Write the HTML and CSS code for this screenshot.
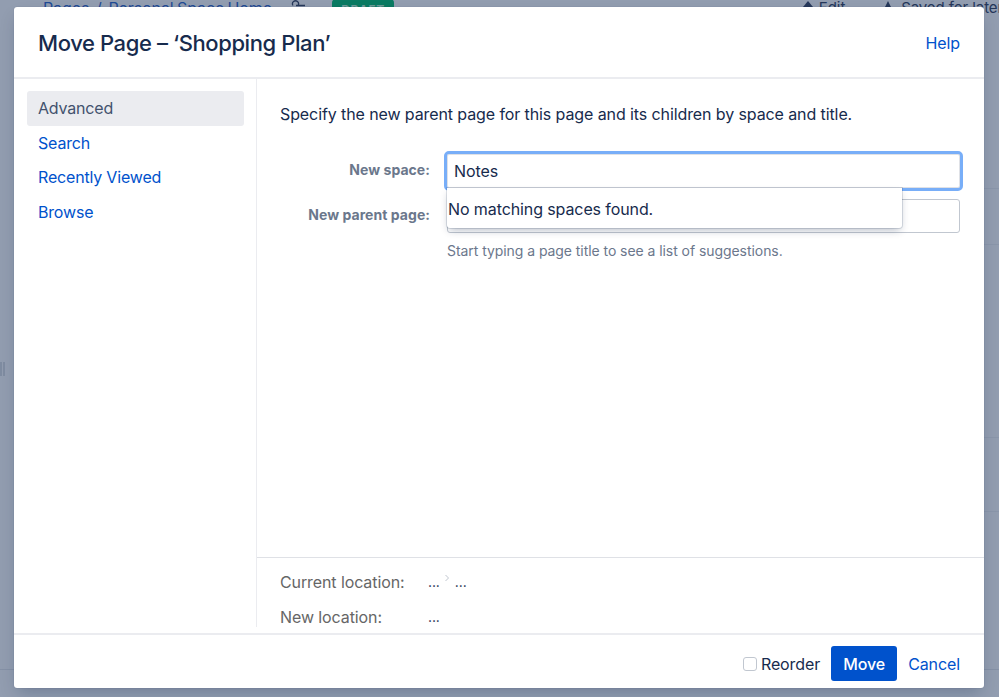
FILE: index.html
```html
<!DOCTYPE html>
<html lang="en">
<head>
<meta charset="utf-8">
<title>Move Page</title>
<link rel="stylesheet" href="styles.css">
</head>
<body>
<div class="page">
  <div class="topbar">
    <div class="crumbs">Pages&nbsp;&nbsp;/&nbsp;&nbsp;Personal Space Home</div>
    <svg class="tree-icon" width="20" height="12" viewBox="0 0 20 12"><path d="M5 5.5a3 3 0 1 1 5 0M8 5.5h9" fill="none" stroke="#26385a" stroke-width="1.3"/></svg>
    <div class="badge">DRAFT</div>
    <div class="actions">
      <span class="action"><svg width="14" height="14" viewBox="0 0 14 14"><path d="M7 0l5 6H2z" fill="#26385a"/></svg>Edit</span>
      <span class="action"><svg width="18" height="14" viewBox="0 0 18 14"><path d="M9 0l3 6h6l-4 4H4L0 6h6z" fill="#26385a"/></svg>Saved for later</span>
    </div>
  </div>
  <div class="rule rule-a"></div>
  <div class="rule rule-b"></div>
  <div class="rule rule-c"></div>
  <div class="rule rule-d"></div>
  <div class="rule rule-e"></div>
  <div class="handle"></div>

  <div class="dialog">
    <header class="dialog-head">
      <h1 class="dialog-title">Move Page – ‘Shopping Plan’</h1>
      <a class="link">Help</a>
    </header>
    <div class="dialog-body">
      <nav class="side">
        <a class="side-item active">Advanced</a>
        <a class="side-item">Search</a>
        <a class="side-item">Recently Viewed</a>
        <a class="side-item">Browse</a>
      </nav>
      <div class="main">
        <div class="content">
          <p class="intro">Specify the new parent page for this page and its children by space and title.</p>
          <div class="field-row first">
            <label class="field-label">New space:</label>
            <div class="field">
              <input class="text-input focused" type="text" value="Notes">
              <div class="dropdown">No matching spaces found.</div>
            </div>
          </div>
          <div class="field-row">
            <label class="field-label">New parent page:</label>
            <div class="field">
              <input class="text-input" type="text">
              <div class="hint">Start typing a page title to see a list of suggestions.</div>
            </div>
          </div>
        </div>
        <div class="locations">
          <div class="loc-row">
            <span class="loc-label">Current location:</span>
            <span class="loc-value">...<svg class="chev" width="6" height="9" viewBox="0 0 6 9"><path d="M1.5 1l3 3-3 3" fill="none" stroke="#c1c7d0" stroke-width="1"/></svg>...</span>
          </div>
          <div class="loc-row">
            <span class="loc-label">New location:</span>
            <span class="loc-value">...</span>
          </div>
        </div>
      </div>
    </div>
    <footer class="dialog-foot">
      <label class="reorder"><input class="check" type="checkbox">Reorder</label>
      <button class="btn-primary" type="button">Move</button>
      <a class="link">Cancel</a>
    </footer>
  </div>
</div>
</body>
</html>
```
FILE: styles.css
```css
* { box-sizing: border-box; }
html, body { margin: 0; padding: 0; }
body { font-family: Inter, "Liberation Sans", sans-serif; font-size: 16px; letter-spacing: -0.1px; color: #172b4d; }
.page {
  position: relative;
  width: 999px;
  height: 697px;
  overflow: hidden;
  background: #929db0;
}
.topbar { display: flex; align-items: flex-start; height: 16px; font-size: 15px; line-height: 16px; padding-left: 43px; }
.crumbs { width: 244px; white-space: nowrap; color: #1f4a94; font-size: 16px; letter-spacing: -0.1px; word-spacing: -1px; }
.tree-icon { margin: 0 0 0 1px; }
.badge { margin: -1px 0 0 24px; width: 62px; height: 16px; background: #0a7a62; border-radius: 4px; color: #6d9a98; font-size: 12px; font-weight: 700; line-height: 22px; letter-spacing: 0.6px; text-align: center; }
.actions { display: flex; gap: 34px; margin-left: auto; margin-right: -4px; color: #25375a; }
.action { display: flex; gap: 4px; align-items: flex-start; white-space: nowrap; }
.action svg { margin-top: 1px; }
.rule { position: absolute; height: 1px; background: #8a96aa; }
.rule-a { left: 984px; right: 0; top: 188px; }
.rule-b { left: 984px; right: 0; top: 244px; }
.rule-c { left: 984px; right: 0; top: 437px; }
.rule-d { left: 984px; right: 0; top: 511px; }
.rule-e { left: 0; right: 0; top: 669px; background: #8591a6; }
.handle { position: absolute; left: 0; top: 362px; width: 5px; height: 14px; border-left: 2px solid #7f8ca1; border-right: 2px solid #7f8ca1; }
.dialog {
  position: absolute;
  left: 14px;
  top: 7px;
  width: 970px;
  height: 681px;
  display: flex;
  flex-direction: column;
  background: #fff;
  border-radius: 3px;
  box-shadow: 0 0 1px rgba(9,30,66,.31), 0 8px 16px -4px rgba(9,30,66,.25);
}
.dialog-head {
  display: flex;
  align-items: center;
  justify-content: space-between;
  height: 72px;
  padding: 2px 24px 0;
  border-bottom: 2px solid #ebecf0;
}
.dialog-title { margin: 0; font-size: 22px; font-weight: 500; line-height: 28px; color: #172b4d; letter-spacing: -0.4px; }
.link { color: #0052cc; text-decoration: none; }
.dialog-body { display: flex; height: 548px; }
.side { width: 243px; flex: none; padding: 12px 12px 0 13px; border-right: 1px solid #ebecf0; }
.side-item { display: flex; align-items: center; height: 34.5px; padding-left: 11px; color: #0052cc; border-radius: 3px; letter-spacing: -0.18px; }
.side-item.active { background: #ebecf0; color: #42526e; }
.main { flex: 1; display: flex; flex-direction: column; min-width: 0; }
.content { flex: 1; padding: 23px 24px 0 23px; }
.intro { margin: 0 0 28px; line-height: 24px; color: #172b4d; }
.field-row { display: grid; grid-template-columns: 150px 1fr; column-gap: 17px; margin-bottom: 11px; }
.field-label { font-size: 14px; font-weight: 700; letter-spacing: 0.05px; color: #6b778c; text-align: right; line-height: 32px; }
.field { position: relative; }
.text-input { display: block; width: 100%; height: 34px; padding: 0 6px; font: inherit; letter-spacing: inherit; color: #172b4d; background: #fff; border: 1px solid #c1c7d0; border-radius: 3px; }
.text-input.focused { border-color: #dfe1e6; outline: 3px solid #78aef8; border-radius: 2px; }
.dropdown {
  position: absolute;
  left: 0;
  top: 34px;
  width: 455px;
  height: 40px;
  padding-left: 1px;
  line-height: 43px;
  background: #fff;
  border-radius: 0 0 3px 3px;
  box-shadow: 0 0 0 1px rgba(9,30,66,.13), 0 4px 8px -2px rgba(9,30,66,.3);
  z-index: 2;
}
.hint { margin-top: 8px; font-size: 14px; line-height: 20px; letter-spacing: -0.06px; color: #6b778c; }
.locations { height: 70px; padding: 6px 24px 0 23px; border-top: 1px solid #dfe1e6; overflow: hidden; }
.loc-row { display: flex; height: 35px; align-items: center; color: #666; }
.loc-label { width: 148px; }
.loc-value { color: #172b4d; font-size: 14px; display: flex; align-items: center; }
.chev { margin: -6px 5px 0 4px; }
.dialog-foot {
  display: flex;
  align-items: center;
  justify-content: flex-end;
  gap: 11px;
  margin-top: 6px;
  flex: 1;
  padding: 10px 24px 6px;
  border-top: 2px solid #ebecf0;
}
.reorder { display: flex; align-items: center; gap: 4px; }
.check { appearance: none; margin: 0; width: 14px; height: 14px; background: #fff; border: 1px solid #c1c7d0; border-radius: 3px; }
.btn-primary { width: 66px; height: 35px; border: 0; border-radius: 3px; background: #0052cc; color: #fff; font: inherit; letter-spacing: inherit; font-weight: 500; padding: 0; }
```
